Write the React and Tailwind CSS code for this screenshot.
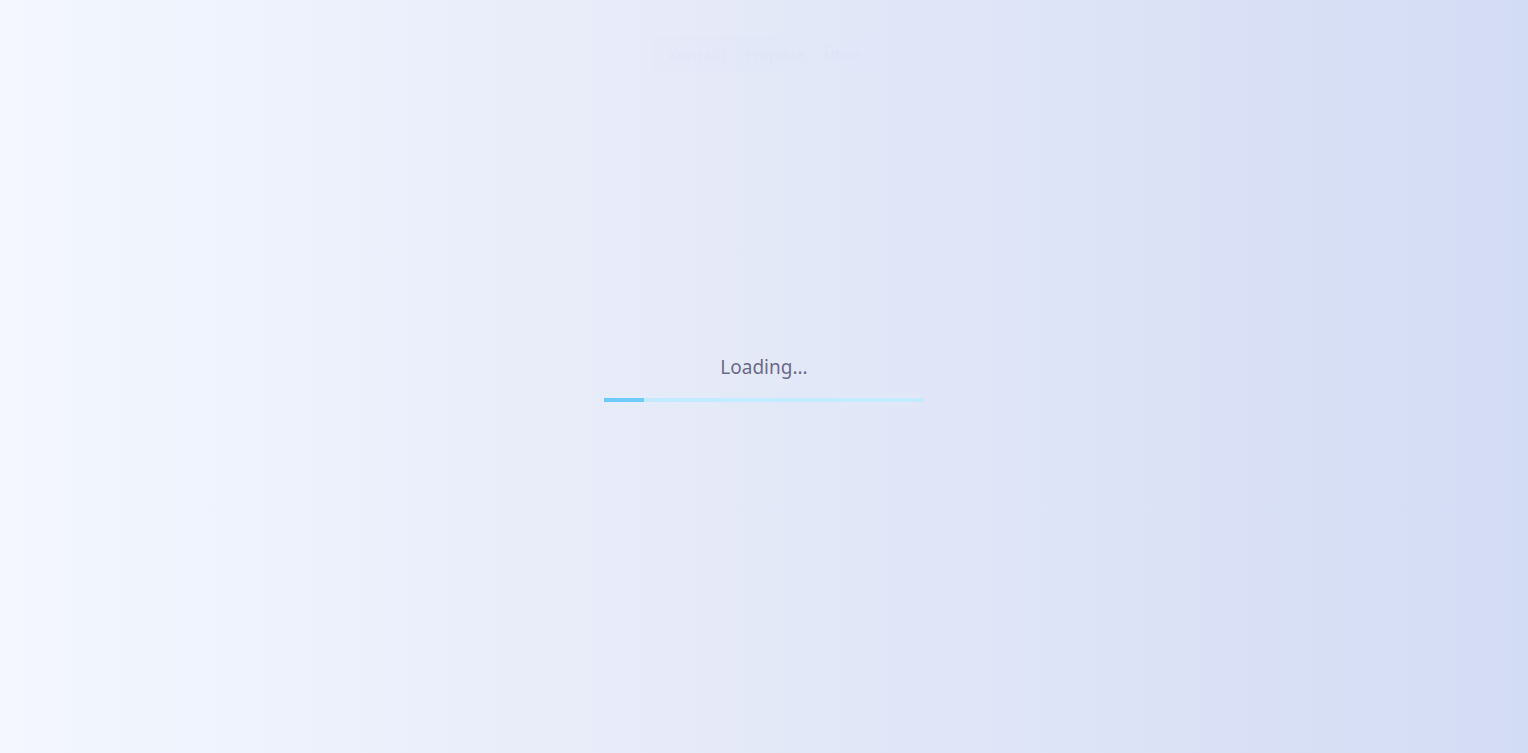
export default function App() {
  return (
    <main
      className="relative flex h-screen w-full flex-col items-center justify-center bg-gradient-to-r from-[#f4f7ff] via-[#e4e9f8] to-[#d3dcf5]"
      style={{ fontFamily: "'Noto Sans', Lato, sans-serif" }}
    >
      {/* faded header placeholder */}
      <div className="absolute left-1/2 top-[37px] flex h-[35px] w-[224px] -translate-x-1/2 items-center justify-between rounded-sm bg-[#e0e7f8]/60 px-4 opacity-10">
        <span className="text-[15px] font-semibold text-[#c9d3ee]">Kontakt</span>
        <span className="text-[15px] font-semibold text-[#c9d3ee]">Projekte</span>
        <span className="text-[15px] font-semibold text-[#c9d3ee]">Über</span>
      </div>

      <div className="flex flex-col items-center pt-[4px]">
        <p className="text-[19px] leading-6 text-[#6b6a86]">Loading...</p>
        <div className="mt-[19px] h-[4px] w-[320px] bg-[#c2ebfe]">
          <div className="h-full w-[40px] bg-[#6ccbf8]" />
        </div>
      </div>
    </main>
  );
}
